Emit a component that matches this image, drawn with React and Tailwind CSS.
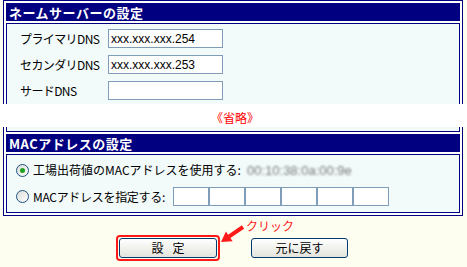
import React from "react";

const jp = "font-['Noto_Sans_CJK_JP',sans-serif]";

function SectionHeader({ children }) {
  return (
    <div className="h-[18px] bg-[#000080] text-white font-bold text-[13px] tracking-[0.5px] leading-none pl-[3px] flex items-center">
      {children}
    </div>
  );
}

function DnsRow({ label, value }) {
  return (
    <div className="flex items-center h-[19px]">
      <span className="w-[88px] text-[12px] tracking-[-0.6px] leading-none">{label}</span>
      <div className="w-[115px] h-[19px] border border-[#7f9db9] bg-white pl-[2px] flex items-center text-[12px] leading-none font-['Liberation_Sans',sans-serif]">
        {value}
      </div>
    </div>
  );
}

function Radio({ checked }) {
  return (
    <div className="w-[13px] h-[13px] rounded-full border border-[#1c5180] bg-linear-to-br from-[#dcdcd7] to-white flex items-center justify-center shrink-0">
      {checked && <div className="w-[5px] h-[5px] rounded-full bg-[#21a121]" />}
    </div>
  );
}

export default function App() {
  return (
    <div className={`relative w-[467px] h-[267px] bg-[#fefef0] overflow-hidden text-black ${jp}`}>
      {/* upper part of frame */}
      <div className="ml-[3px] w-[460px] h-[104px] border-x border-t border-[#000080] bg-white px-[2px] pt-[2px]">
        <SectionHeader>ネームサーバーの設定</SectionHeader>
        <div className="mt-[2px] h-[81px] border-x border-t border-[#000080] bg-[#f2fafa] pt-[5px] pl-[13px] flex flex-col gap-[7px]">
          <DnsRow label="プライマリDNS" value="xxx.xxx.xxx.254" />
          <DnsRow label="セカンダリDNS" value="xxx.xxx.xxx.253" />
          <DnsRow label="サードDNS" value="" />
        </div>
      </div>

      {/* omitted band */}
      <div className="h-[23px] bg-white flex items-center justify-center pt-[5px] pl-[3px] text-[12px] leading-none text-[#ff0000]">
        《省略》
      </div>

      {/* lower part of frame */}
      <div className="ml-[3px] w-[460px] border-x border-b border-[#000080] bg-white px-[2px] pb-[2px]">
        <div className="h-[5px] border-x border-b border-[#000080] bg-[#f2fafa]" />
        <div className="mt-[2px]">
          <SectionHeader>MACアドレスの設定</SectionHeader>
        </div>
        <div className="mt-[2px] border border-[#000080] bg-[#f2fafa] pt-[5px] pb-[6px] pl-[9px] flex flex-col gap-[7px]">
          <div className="h-[20px] flex items-center">
            <Radio checked />
            <span className="ml-[4px] w-[214px] text-[12px] leading-none whitespace-nowrap">
              工場出荷値のMACアドレスを使用する:
            </span>
            <span className="text-[13px] leading-none text-[#7a7a7a] blur-[1.2px] font-['Liberation_Sans',sans-serif]">
              00:10:38:0a:00:9e
            </span>
          </div>
          <div className="h-[19px] flex items-center">
            <Radio />
            <span className="ml-[4px] w-[140px] text-[12px] tracking-[-0.3px] leading-none whitespace-nowrap">
              MACアドレスを指定する:
            </span>
            <div className="flex">
              {[0, 1, 2, 3, 4, 5].map((i) => (
                <div key={i} className="w-[36px] h-[19px] border border-[#7f9db9] bg-white" />
              ))}
            </div>
          </div>
        </div>
      </div>

      {/* buttons */}
      <div className="mt-[22px] flex justify-center gap-[34px]">
        <div className="relative">
          <div className="absolute -inset-[3px] rounded-[4px] border-2 border-[#ff1a1a]" />
          <button className="w-[98px] h-[20px] border border-[#003c74] rounded-[3px] bg-linear-to-b from-white to-[#e4e4dc] text-[12px] leading-none flex items-center justify-center gap-[9px]">
            <span>設</span>
            <span>定</span>
          </button>
        </div>
        <button className="w-[97px] h-[20px] border border-[#003c74] rounded-[3px] bg-linear-to-b from-white to-[#e4e4dc] text-[12px] leading-none">
          元に戻す
        </button>
      </div>

      {/* click annotation */}
      <svg className="absolute left-[218px] top-[222px] w-[30px] h-[24px]" viewBox="0 0 30 24">
        <polygon
          fill="#ff1a1a"
          points="3,20 14.65,19.32 12.4,16 26.13,6.65 23.87,3.35 10.14,12.7 7.89,9.4"
        />
      </svg>
      <span className="absolute left-[246px] top-[220px] text-[12px] leading-none text-[#ff1a1a]">
        クリック
      </span>
    </div>
  );
}
